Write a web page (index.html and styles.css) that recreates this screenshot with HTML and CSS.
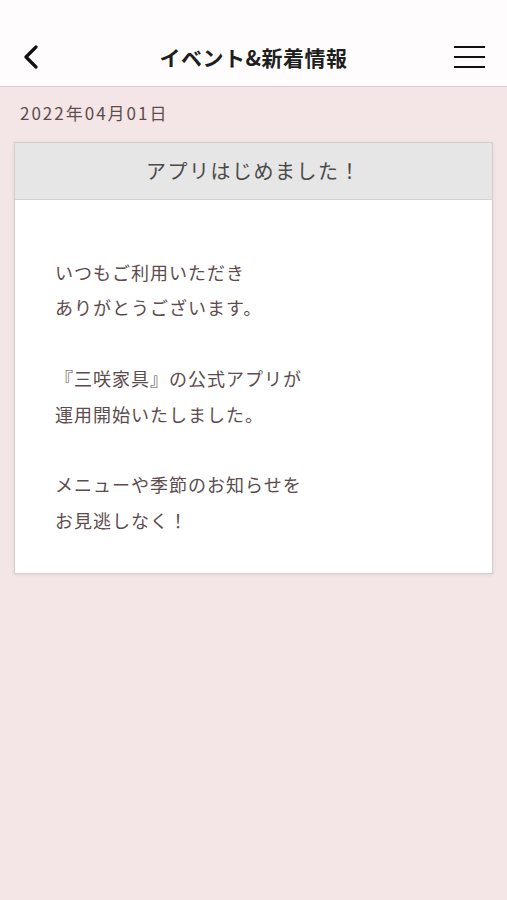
FILE: index.html
```html
<!DOCTYPE html>
<html lang="ja">
<head>
    <meta charset="UTF-8">
    <meta name="viewport" content="width=device-width, initial-scale=1.0">
    <title>イベント&amp;新着情報</title>
    <link rel="stylesheet" href="styles.css">
</head>
<body>
    <header class="header">
        <a class="back-button" href="#">
            <svg width="18" height="24" viewBox="0 0 18 24">
                <path d="M14 2 L4 12 L14 22" fill="none" stroke="#111" stroke-width="3.2" stroke-linecap="round" stroke-linejoin="round"/>
            </svg>
        </a>
        <h1 class="header-title">イベント&amp;新着情報</h1>
        <button class="menu-button">
            <span></span>
            <span></span>
            <span></span>
        </button>
    </header>

    <main class="content">
        <p class="news-date">2022年04月01日</p>
        <article class="news-card">
            <h2 class="news-title">アプリはじめました！</h2>
            <div class="news-body">
                <p>いつもご利用いただき<br>ありがとうございます。</p>
                <p>『三咲家具』の公式アプリが<br>運用開始いたしました。</p>
                <p>メニューや季節のお知らせを<br>お見逃しなく！</p>
            </div>
        </article>
    </main>
</body>
</html>
```

FILE: styles.css
```css
body {
    font-family: "Noto Sans CJK JP", "Noto Sans", sans-serif;
    margin: 0;
    padding: 0;
    min-height: 100vh;
    background-color: #f4e5e6;
    color: #5c4c4e;
}
.header {
    display: flex;
    align-items: center;
    justify-content: space-between;
    height: 58px;
    padding: 28px 22px 0 22px;
    background-color: #fefcfc;
    border-bottom: 1px solid #dccdce;
}
.back-button {
    display: flex;
    width: 31px;
}
.header-title {
    margin: 0;
    font-size: 21px;
    font-weight: bold;
    color: #1e1e1e;
    letter-spacing: 0.5px;
}
.menu-button {
    display: flex;
    flex-direction: column;
    gap: 7.5px;
    width: 31px;
    padding: 0;
    border: none;
    background: none;
}
.menu-button span {
    display: block;
    height: 2.5px;
    background-color: #111;
}
.content {
    padding: 14px 14px 0 14px;
}
.news-date {
    margin: 0 0 17px 6px;
    font-size: 17px;
    line-height: 24px;
    letter-spacing: 2px;
}
.news-card {
    background-color: white;
    border: 1px solid #d3cfcf;
    box-shadow: 0 1px 4px rgba(0,0,0,0.08);
}
.news-title {
    margin: 0;
    height: 56px;
    line-height: 56px;
    text-align: center;
    font-size: 20px;
    font-weight: normal;
    letter-spacing: 1.5px;
    color: #4a4a4a;
    background-color: #e6e6e6;
    border-bottom: 1px solid #d3d3d3;
}
.news-body {
    padding: 55px 40px 35px 40px;
    font-size: 18px;
    line-height: 35.4px;
    letter-spacing: 1px;
}
.news-body p {
    margin: 0 0 35.4px 0;
}
.news-body p:last-child {
    margin-bottom: 0;
}
```
